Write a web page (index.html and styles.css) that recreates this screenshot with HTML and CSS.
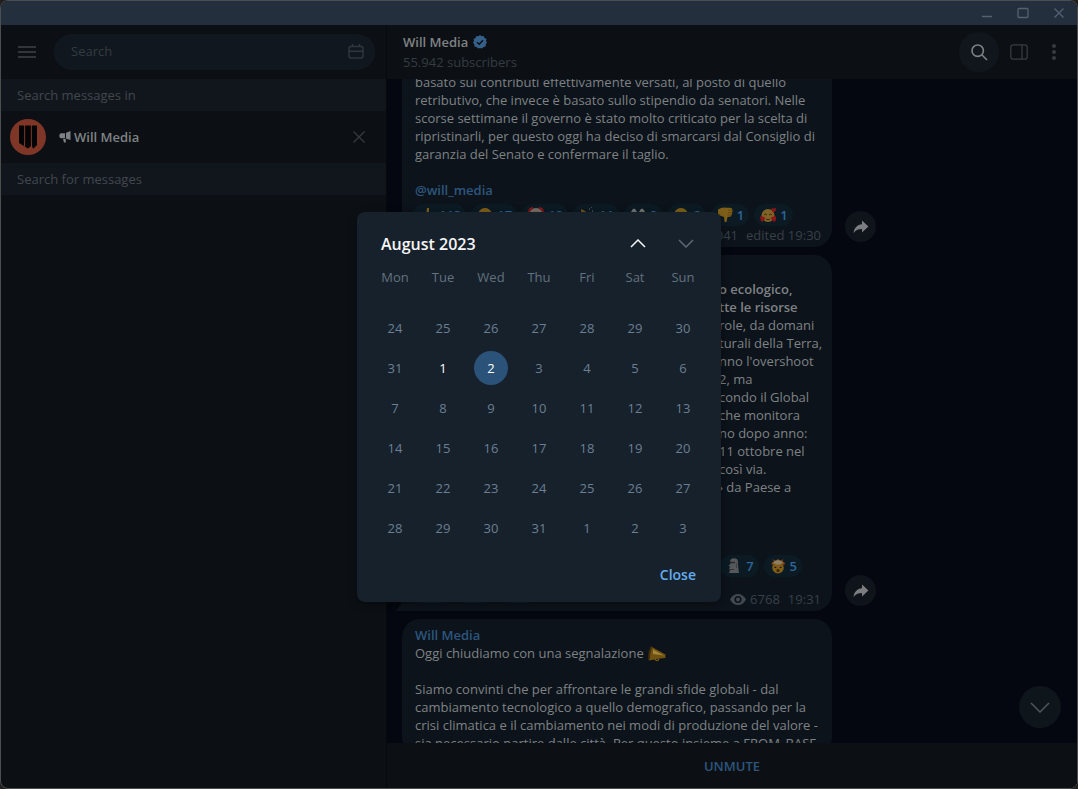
FILE: index.html
```html
<!DOCTYPE html>
<html lang="it">
<head>
<meta charset="utf-8">
<title>Will Media</title>
<link rel="stylesheet" href="styles.css">
</head>
<body>
<svg class="defs" aria-hidden="true">
  <symbol id="share" viewBox="0 0 16 14"><path d="M9 0.6 15.4 6.6 9 12.4V9C5.500 9 3 9.800 .6 13 1 8 4 4.600 9 4.200Z" fill="currentColor"/></symbol>
  <symbol id="smile" viewBox="0 0 16 16"><circle cx="8" cy="8" r="7" fill="#806019"/><path d="M4 8q1.500-2 3 0M9 8q1.500-2 3 0M5 11q3 2.500 6 0" stroke="#3c230b" fill="none"/></symbol>
</svg>
<div class="window">
  <header class="titlebar">
    <button class="win-btn" aria-label="Minimize"><svg width="12" height="12" viewBox="0 0 12 12"><path d="M1 9.500h10"/></svg></button>
    <button class="win-btn" aria-label="Maximize"><svg width="12" height="12" viewBox="0 0 12 12"><rect x="1" y="1.500" width="10" height="9" rx="1"/></svg></button>
    <button class="win-btn" aria-label="Close window"><svg width="12" height="12" viewBox="0 0 12 12"><path d="M1.500 1.500l9 9M10.500 1.500l-9 9"/></svg></button>
  </header>
  <div class="columns">
    <aside class="sidebar">
      <div class="search-bar">
        <button class="menu-btn" aria-label="Menu"><svg width="18" height="12" viewBox="0 0 18 12"><path d="M0 1h18M0 6h18M0 11h18" stroke="currentColor" stroke-width="2"/></svg></button>
        <div class="search-field">
          <input class="search-input" type="text" placeholder="Search" aria-label="Search">
          <button class="icon-btn" aria-label="Pick a date"><svg width="16" height="15" viewBox="0 0 16 15" fill="none" stroke="currentColor" stroke-width="1.500"><rect x="1" y="2.500" width="14" height="11.500" rx="2"/><path d="M1 7.300h14M4.500 0v3M11.500 0v3"/></svg></button>
        </div>
      </div>
      <h2 class="section-title">Search messages in</h2>
      <div class="chat-row">
        <svg class="avatar" width="36" height="36" viewBox="0 0 36 36" aria-hidden="true"><circle cx="18" cy="18" r="18" fill="#7f3627"/><path d="M9 6.500h5V27l1 1V6.500h6V27l1 1V6.500h5V26l-3.500 3.500L21 27l-3 2.500L9 24Z" fill="#030405"/><path d="M14.800 7v17M21.200 7v17" stroke="#5c281d" stroke-width=".8"/></svg>
        <svg class="horn" width="12" height="12" viewBox="0 0 12 12" aria-hidden="true"><path d="M11.500 0v9L6 7.300H2Q.3 7.300 .3 4.800T2 2.200h4ZM4 8h2.800v3.500H5Z" fill="#7f8285"/><path d="M6.500 2v5.500" stroke="#0c1014"/></svg>
        <span class="chat-name">Will Media</span>
        <button class="icon-btn" aria-label="Remove filter"><svg width="12" height="12" viewBox="0 0 12 12"><path d="M.5.500l11 11M11.500.500l-11 11" stroke="currentColor" stroke-width="1.400"/></svg></button>
      </div>
      <h2 class="section-title">Search for messages</h2>
    </aside>
    <main class="chat">
      <header class="chat-header">
        <div class="chat-info">
          <h1 class="chat-title">Will Media <svg width="14" height="14" viewBox="0 0 14 14" aria-label="Verified"><path d="M7 0 8.700 1.300 10.800 1 11.500 3 13.500 4 13 6 14 7.700 12.700 9.300 12.600 11.500 10.500 11.900 9 13.600 7 12.900 5 13.600 3.600 11.900 1.400 11.500 1.300 9.300 0 7.700 1 6 .6 4 2.600 3 3.300 1 5.400 1.300Z" fill="#34608a"/><path d="M4 7.200l2.200 2.100L10 5.200" fill="none" stroke="#0c1014" stroke-width="1.500"/></svg></h1>
          <p class="chat-sub">55.942 subscribers</p>
        </div>
        <div class="chat-tools">
          <button class="tool tool-active" aria-label="Search in chat"><svg width="17" height="17" viewBox="0 0 17 17" fill="none" stroke="currentColor" stroke-width="1.600"><circle cx="6.700" cy="6.700" r="5.700"/><path d="M10.800 10.800 16 16"/></svg></button>
          <button class="tool" aria-label="Side panel"><svg width="18" height="16" viewBox="0 0 18 16" fill="none" stroke="currentColor" stroke-width="1.300"><rect x=".8" y=".8" width="16.400" height="14.400" rx="2.500"/><path d="M12 1v14"/></svg></button>
          <button class="tool tool-narrow" aria-label="More"><svg width="4" height="16" viewBox="0 0 4 16" fill="currentColor"><circle cx="2" cy="2" r="2"/><circle cx="2" cy="8" r="2"/><circle cx="2" cy="14" r="2"/></svg></button>
        </div>
      </header>
      <section class="messages">
        <div class="message">
          <article class="bubble bubble-cut">
            <p>basato sui contributi effettivamente versati, al posto di quello<br>retributivo, che invece è basato sullo stipendio da senatori. Nelle<br>scorse settimane il governo è stato molto criticato per la scelta di<br>ripristinarli, per questo oggi ha deciso di smarcarsi dal Consiglio di<br>garanzia del Senato e confermare il taglio.</p>
            <p class="handle"><a href="#">@will_media</a></p>
            <div class="reactions">
              <button class="pill"><svg width="16" height="16" viewBox="0 0 16 16"><path d="M7 8 8 1h2v6h4v7H4V8Z" fill="#806019"/></svg>113</button>
              <button class="pill"><svg width="16" height="16"><use href="#smile"/></svg>17</button>
              <button class="pill"><svg width="16" height="16" viewBox="0 0 16 16"><circle cx="8" cy="8" r="7" fill="#777064"/><path d="M1 6Q1 1 5 1M15 6Q15 1 11 1" stroke="#8b1619" stroke-width="2" fill="none"/></svg>18</button>
              <button class="pill"><svg width="16" height="16" viewBox="0 0 16 16"><path d="M2 2l4 2 3 3v7H3Z" fill="#80551b"/><path d="M10 2h1M13 4h1M12 0h1" stroke="#777"/></svg>11</button>
              <button class="pill"><svg width="16" height="16" viewBox="0 0 16 16"><path d="M1 5q3-7 6 0v6H1ZM9 5q3-7 6 0v6H9Z" fill="#747474"/></svg>9</button>
              <button class="pill"><svg width="16" height="16"><use href="#smile"/></svg>2</button>
              <button class="pill"><svg width="16" height="16" viewBox="0 0 16 16"><path d="M1 2.500Q5 0 9 .8h4q2.500 0 2.500 2.700T14 9.500l-3.500.5-.8 4.500q-1 1.500-2.200 0L7 10 1 8Z" fill="#806019"/><path d="M11 3h4M11 5.500h4M10.500 8h4" stroke="#5c420f" stroke-width=".8"/></svg>1</button>
              <button class="pill"><svg width="16" height="16" viewBox="0 0 16 16"><circle cx="8" cy="8.500" r="6.500" fill="#806426"/><path d="M4 8q1.500-2 3 0M9 8q1.500-2 3 0M6 12q2 1.500 4 0" stroke="#3c230b" fill="none"/><path d="M11 2q1.500-2 2.500 0Q16-1 16 3l-2.500 3ZM0 10q2-2 3 0 2-1 2 2l-3 3Q0 13 0 10ZM11 12q0-3 2-2 2-2 3 0 1 3-2 5Z" fill="#8c1519"/></svg>1</button>
            </div>
            <footer class="meta meta-row"><span>7041</span><span>edited 19:30</span></footer>
          </article>
          <button class="share" aria-label="Share"><svg width="16" height="14"><use href="#share"/></svg></button>
        </div>
        <div class="message">
          <article class="bubble">
            <h3 class="author">Will Media</h3>
            <p class="continued"><b>o ecologico,<br>tte le risorse</b><br>role, da domani<br>turali della Terra,<br>nno l'overshoot<br>2, ma<br>condo il Global<br>che monitora<br>no dopo anno:<br>11 ottobre nel<br>così via.<br>› da Paese a</p>
            <div class="reactions reactions-end">
              <button class="pill"><svg width="16" height="16" viewBox="0 0 16 16"><path d="M5 1Q8-.5 11 1q1.500 2 1 6l1 8H3l1-3-1-2 1.500-1L2.500 8 5 5 4 3Z" fill="#55575a"/><path d="M5 4.500h4" stroke="#24282b" stroke-width="1.500"/><path d="M4 11.500h4" stroke="#303437"/><path d="M10.500 5v5" stroke="#3d4043"/></svg>7</button>
              <button class="pill"><svg width="16" height="16" viewBox="0 0 18 18"><circle cx="9" cy="11" r="6.500" fill="#805d18"/><path d="M2 8Q1 4 5 4L2 1l4 2 3-2 3 2 3-2-1 3q4 1 2 4-7-3-14 0Z" fill="#844512"/><path d="M3.500 6q1-3.500 5.500-3.500T14.500 6L9 7.500Z" fill="#8b8066"/><path d="M5 10.500h2M11 10.500h2" stroke="#22180c" stroke-width="1.500"/><circle cx="9" cy="14" r="1.700" fill="#3c230b"/></svg>5</button>
            </div>
            <div class="bottom-row">
              <div class="reactions">
                <button class="pill pill-short" aria-label="Reaction"></button>
                <button class="pill pill-short" aria-label="Reaction"></button>
                <button class="pill pill-short" aria-label="Reaction"></button>
              </div>
              <footer class="meta"><span class="views"><svg width="16" height="11" viewBox="0 0 16 11" aria-hidden="true"><path d="M0 5.500Q3 0 8 0t8 5.500Q13 11 8 11T0 5.500Z" fill="#414951"/><circle cx="8" cy="5.500" r="3.600" fill="#0c131a"/><circle cx="8" cy="5.500" r="2" fill="#414951"/></svg>6768</span><span>19:31</span></footer>
            </div>
            <svg class="tail" width="22" height="16" viewBox="0 0 22 16" aria-hidden="true"><path d="M6 0Q6 11 0 15v1h22V0Z" fill="#0c131a"/></svg>
          </article>
          <button class="share" aria-label="Share"><svg width="16" height="14"><use href="#share"/></svg></button>
        </div>
        <div class="message">
          <article class="bubble">
            <h3 class="author">Will Media</h3>
            <p>Oggi chiudiamo con una segnalazione <svg class="emoji" width="19" height="16" viewBox="0 0 19 16" aria-label="megaphone"><path d="M4 0.500 18.500 8.500v3.500L13 12.500 2 14.500Z" fill="#6f5212"/><path d="M4 0Q1 4 1 14l2-1Q3 6 5 2Z" fill="#3e2b0b"/><path d="M6 3.500 17 9.500 6 8Z" fill="#a18538"/><path d="M8 13q2 3.500 4 0" fill="none" stroke="#806015" stroke-width="1.200"/></svg></p>
            <p class="spaced">Siamo convinti che per affrontare le grandi sfide globali - dal<br>cambiamento tecnologico a quello demografico, passando per la<br>crisi climatica e il cambiamento nei modi di produzione del valore -<br>sia necessario partire dalle città. Per questo insieme a FROM_BASE</p>
          </article>
        </div>
        <button class="to-bottom" aria-label="Scroll to bottom"><svg width="20" height="11" viewBox="0 0 20 11"><path d="M1 1l9 9 9-9" fill="none" stroke="currentColor" stroke-width="1.600"/></svg></button>
      </section>
      <button class="unmute">UNMUTE</button>
    </main>
    <div class="overlay">
      <section class="calendar" role="dialog" aria-labelledby="month">
        <header class="cal-header">
          <h2 class="cal-title" id="month">August 2023</h2>
          <button class="cal-nav cal-prev" aria-label="Previous month"><svg width="16" height="9" viewBox="0 0 16 9"><path d="M1 8l7-7 7 7"/></svg></button>
          <button class="cal-nav" aria-label="Next month"><svg width="16" height="9" viewBox="0 0 16 9"><path d="M1 1l7 7 7-7"/></svg></button>
        </header>
        <table class="days">
          <thead><tr><th>Mon</th><th>Tue</th><th>Wed</th><th>Thu</th><th>Fri</th><th>Sat</th><th>Sun</th></tr></thead>
          <tbody>
            <tr><td>24</td><td>25</td><td>26</td><td>27</td><td>28</td><td>29</td><td>30</td></tr>
            <tr><td>31</td><td><button class="day">1</button></td><td><button class="day day-selected">2</button></td><td>3</td><td>4</td><td>5</td><td>6</td></tr>
            <tr><td>7</td><td>8</td><td>9</td><td>10</td><td>11</td><td>12</td><td>13</td></tr>
            <tr><td>14</td><td>15</td><td>16</td><td>17</td><td>18</td><td>19</td><td>20</td></tr>
            <tr><td>21</td><td>22</td><td>23</td><td>24</td><td>25</td><td>26</td><td>27</td></tr>
            <tr><td>28</td><td>29</td><td>30</td><td>31</td><td>1</td><td>2</td><td>3</td></tr>
          </tbody>
        </table>
        <footer class="cal-footer"><button class="close-btn">Close</button></footer>
      </section>
    </div>
  </div>
</div>
</body>
</html>
```
FILE: styles.css
```css
* { box-sizing: border-box; }
body, h1, h2, h3, p { margin: 0; }
body {
  background: #201f1e;
  font: 13px/18px "Open Sans", sans-serif;
  color: #7f8285;
}
button {
  display: inline-flex;
  align-items: center;
  justify-content: center;
  padding: 0;
  border: 0;
  background: none;
  color: inherit;
  font: inherit;
}
svg { flex-shrink: 0; }
h1, h2, h3, b { font-size: 13px; font-weight: 600; }
.defs { position: absolute; width: 0; height: 0; }

.window {
  display: flex;
  flex-direction: column;
  height: 100vh;
  border: 1px solid #4b4d4f;
  border-radius: 8px;
  overflow: hidden;
  background: #0c1014;
}
.titlebar {
  display: flex;
  justify-content: flex-end;
  height: 24px;
  flex-shrink: 0;
  background: #242f3d;
}
.win-btn { width: 36px; color: #536171; }
.win-btn svg { fill: none; stroke: currentColor; stroke-width: 1.3; }
.columns { position: relative; display: flex; flex: 1; min-height: 0; }

.sidebar { width: 386px; flex-shrink: 0; border-right: 1px solid #06090d; }
.search-bar { display: flex; align-items: center; gap: 18px; height: 54px; padding: 0 11px 0 17px; color: #30363b; }
.search-field {
  display: flex;
  align-items: center;
  flex: 1;
  height: 36px;
  padding: 0 11px 2px 17px;
  border-radius: 18px;
  background: #11171f;
}
.search-input { flex: 1; min-width: 0; padding: 0; border: 0; outline: 0; background: none; color: #7f8285; font: inherit; }
.search-input::placeholder { color: #343b41; opacity: 1; }
.section-title { height: 32px; padding: 0 16px; background: #11161d; color: #41474d; font-weight: 400; line-height: 32px; }
.chat-row { display: flex; align-items: center; height: 52px; padding: 0 21px 0 9px; color: #343a3f; }
.horn { margin: 0 3px 0 13px; }
.chat-name { flex: 1; color: #7f8285; font-weight: 600; }

.chat { display: flex; flex-direction: column; flex: 1; min-width: 0; background: #04070f; }
.chat-header {
  display: flex;
  align-items: center;
  justify-content: space-between;
  height: 54px;
  flex-shrink: 0;
  padding: 0 8px 0 16px;
  background: #0c1014;
}
.chat-title { display: flex; align-items: center; gap: 5px; line-height: 20px; color: #7f8285; }
.chat-sub { line-height: 20px; color: #343c43; }
.chat-tools { display: flex; align-items: center; color: #363c40; }
.tool { width: 40px; height: 40px; border-radius: 50%; }
.tool-narrow { width: 30px; }
.tool-active { background: #11161d; color: #7f8285; }

.messages { position: relative; flex: 1; min-height: 0; overflow: hidden; padding: 0 15px; }
.message { display: flex; align-items: flex-end; gap: 13px; margin-bottom: 8px; }
.bubble {
  position: relative;
  width: 430px;
  padding: 7px 13px 3px;
  border-radius: 18px;
  background: #0c131a;
  white-space: nowrap;
}
.bubble-cut { margin-top: -13px; padding-bottom: 0; border-radius: 0 0 18px 18px; }
.bubble a, .author { color: #2c567e; text-decoration: none; }
.handle { margin: 18px 0 5px; font-weight: 600; }
.spaced { margin-top: 18px; }
.continued { margin: 0 0 59px; padding-left: 304px; }
.emoji { vertical-align: -4px; }
.reactions { display: flex; gap: 5px; margin-left: -2px; }
.reactions-end { justify-content: flex-end; padding-right: 17px; }
.pill { height: 22px; gap: 4px; padding: 0 5px 0 6px; border-radius: 11px; background: #0b1a23; color: #2e659a; font-weight: 600; }
.pill-short { width: 38px; }
.bottom-row { display: flex; justify-content: space-between; margin-top: 4px; }
.bottom-row .reactions { padding-bottom: 5px; }
.meta { display: flex; align-items: flex-end; gap: 8px; margin-right: -2px; color: #384048; }
.meta-row { height: 21px; align-items: flex-start; justify-content: flex-end; }
.views { display: flex; align-items: center; gap: 4px; }
.tail { position: absolute; left: -6px; bottom: 0; }
.share { width: 31px; height: 31px; margin-bottom: 5px; border-radius: 50%; background: #0e141a; color: #7b7d80; }
.to-bottom { position: absolute; right: 16px; bottom: 15px; width: 42px; height: 42px; border-radius: 50%; background: #0e151b; color: #505458; }
.unmute { height: 45px; flex-shrink: 0; background: #0c1014; color: #2c567e; font-weight: 600; }

.overlay { position: absolute; inset: 0; display: grid; place-items: center; }
.calendar {
  padding: 14px 14px 0;
  border-radius: 8px;
  background: #17212b;
  box-shadow: 0 2px 8px rgba(0, 0, 0, .4);
}
.cal-header { display: flex; align-items: center; height: 36px; padding: 0 9px 0 10px; }
.cal-title { flex: 1; font-size: 16px; line-height: 24px; color: #f5f5f5; }
.cal-nav { width: 48px; height: 36px; color: #5c6873; }
.cal-nav:last-child { margin-right: -12px; }
.cal-nav svg { fill: none; stroke: currentColor; stroke-width: 1.5; }
.cal-prev { color: #f5f5f5; }
.days { border-collapse: collapse; table-layout: fixed; width: 336px; color: #6a7f93; text-align: center; }
.days th { height: 46px; padding: 6px 0 0; color: #62717f; font-weight: 400; vertical-align: top; }
.days td { height: 40px; padding: 0; }
.day { width: 34px; height: 34px; border-radius: 50%; color: #fff; vertical-align: middle; }
.day-selected { background: #2b5278; }
.cal-footer { display: flex; align-items: center; justify-content: flex-end; height: 54px; padding-right: 11px; }
.close-btn { font-size: 14px; font-weight: 600; line-height: 20px; color: #62adef; }
```
